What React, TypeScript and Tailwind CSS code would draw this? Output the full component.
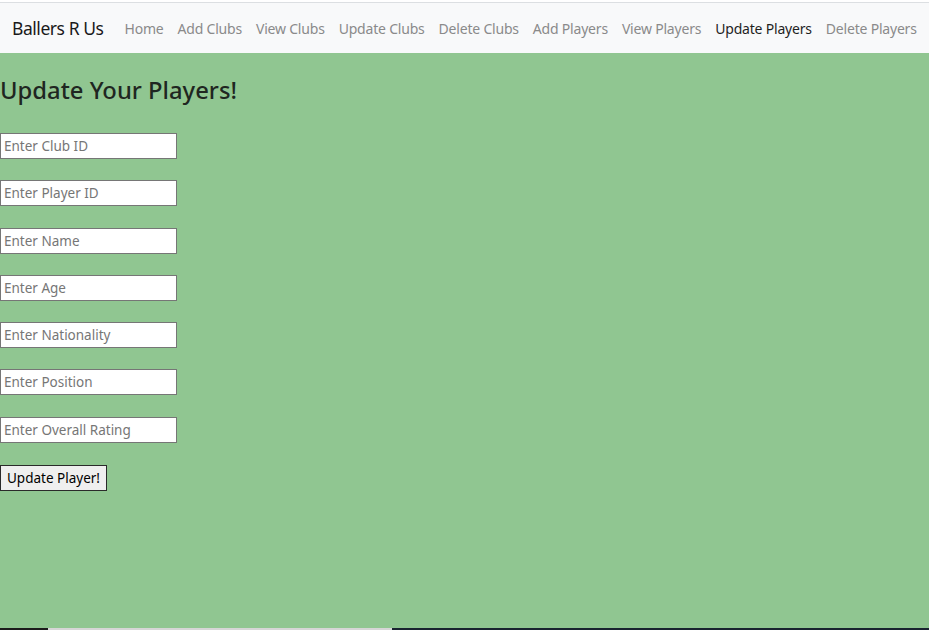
import React from "react";

const links = [
  "Home",
  "Add Clubs",
  "View Clubs",
  "Update Clubs",
  "Delete Clubs",
  "Add Players",
  "View Players",
  "Update Players",
  "Delete Players",
];

const fields = [
  "Enter Club ID",
  "Enter Player ID",
  "Enter Name",
  "Enter Age",
  "Enter Nationality",
  "Enter Position",
  "Enter Overall Rating",
];

export default function App() {
  return (
    <div
      className="w-[929px] h-[630px] flex flex-col bg-[#90c691] overflow-hidden"
      style={{ fontFamily: '"Noto Sans", "Open Sans", sans-serif' }}
    >
      <div className="h-[2px] bg-white" />
      <div className="h-px bg-[#dcdfe2]" />
      <nav className="h-[50px] bg-[#f8f9fa] flex items-center pl-[12px] whitespace-nowrap">
        <span className="text-[17.5px] tracking-[-0.45px] text-[#1a1a1a] mr-[14px] shrink-0">
          Ballers R Us
        </span>
        <div className="flex shrink-0">
          {links.map((l) => (
            <span
              key={l}
              className={`px-[7px] text-[14px] tracking-[-0.2px] shrink-0 ${
                l === "Update Players" ? "text-[#1f1f1f]" : "text-[#8a8a8a]"
              }`}
            >
              {l}
            </span>
          ))}
        </div>
      </nav>
      <main className="flex-1 flex flex-col items-start">
        <h2 className="text-[23.8px] font-medium text-[#1f2621] leading-[30px] mt-[22px] mb-[28px]">
          Update Your Players!
        </h2>
        <div className="flex flex-col gap-[21.3px]">
          {fields.map((f) => (
            <input
              key={f}
              placeholder={f}
              className="w-[177px] h-[26px] bg-white border border-[#767676] px-[3px] text-[13.5px] text-black placeholder:text-[#767676] outline-none"
            />
          ))}
        </div>
        <button className="mt-[22px] h-[26px] w-[107px] bg-[#efefef] border border-[#2a2a2a] text-[13.5px] text-black">
          Update Player!
        </button>
      </main>
      <div className="h-[2px] flex">
        <div className="w-[48px] bg-[#1c1c1c]" />
        <div className="w-[344px] bg-[#d6d6d6]" />
        <div className="flex-1 bg-[#1a2430]" />
      </div>
    </div>
  );
}
